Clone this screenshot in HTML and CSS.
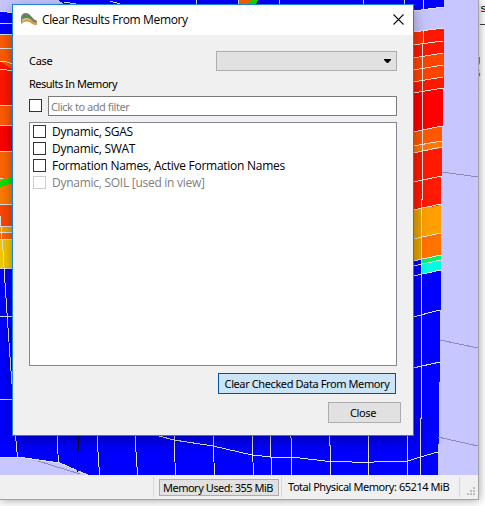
FILE: index.html
```html
<!DOCTYPE html>
<html lang="en">
<head>
<meta charset="utf-8">
<title>Clear Results From Memory</title>
<link rel="stylesheet" href="styles.css">
</head>
<body>
<div class="behind"><span class="in">s</span><span class="in">—</span><span>:</span><span>g</span><span>5</span><span>)</span></div>
<main class="app">
  <svg class="scene" width="478" height="475" viewBox="0 0 478 475" shape-rendering="crispEdges" aria-hidden="true">
    <rect width="478" height="475" fill="#c8c6ff"/>
    <path fill="#0000ff" d="M0 11L14 13V34H0ZM58 0H444V7L413 11V4H64ZM0 268H12V436H413V276L441 270L440 352L438 475H88L60 463L18 457H0Z"/>
    <path fill="#ff5b00" d="M0 34H13V151H0Z"/>
    <path fill="#ff1800" d="M0 61L13 70V105H0Z"/>
    <path fill="#ff0000" d="M0 125H13V152H0Z"/>
    <path fill="#ff6600" d="M0 152H13V240H0Z"/>
    <path fill="#ff7b00" d="M0 178H13V205H0Z"/>
    <path fill="#ff4800" d="M0 205H13V227H0Z"/>
    <path fill="#f5a000" d="M0 227H13V233H0Z"/>
    <path fill="#f5cb00" d="M0 239H13V269H0Z"/>
    <path fill="#ff3000" d="M413 32L444 28V41L413 45Z"/>
    <path fill="#ff1800" d="M423 30L444 28V53L413 58V45L423 43Z"/>
    <path fill="#ff4400" d="M413 58L444 53V77L413 82Z"/>
    <path fill="#ff1800" d="M413 82L444 77V88L413 93Z"/>
    <path fill="#ff0000" d="M413 93L443 88V126L413 132Z"/>
    <path fill="#ff5900" d="M413 132L442 126V141L413 146Z"/>
    <path fill="#ff7700" d="M413 146L442 141V148L413 153Z"/>
    <path fill="#ff1a00" d="M413 153L442 148L441 205L413 210Z"/>
    <path fill="#ffa000" d="M413 210L441 205V233L413 239Z"/>
    <path fill="#e8a500" d="M413 210L421 208V260L413 261Z"/>
    <path fill="#ff7300" d="M422 237L441 233V255L422 259Z"/>
    <path fill="#00f56d" d="M422 259L441 255V260L422 264Z"/>
    <path fill="#00ffe0" d="M422 264L441 260V270L422 274Z"/>
    <path fill="#0000ff" d="M413 261L421 259V275L413 276Z"/>
    <path fill="#f56500" d="M238 0H252L250 4H238Z"/>
    <path fill="#00e600" d="M252 0H258L256 4H249ZM0 181L13 177V183L0 187Z"/>
    <path class="mesh" d="M0 11L13 13M0 23H13M0 34H13M0 48H13M0 61L7 62L13 64M0 69L13 71M0 105H13M0 125H13M0 151L13 152M0 178H3M0 204L13 205M0 226L13 227M0 232L13 233M0 239L13 240M0 268H12M0 316H13M0 399H10L12 400M0 216L3 250L5 283L8 328L11 371V384"/>
    <path class="mesh" d="M64 2L76 4M110 1L120 4M196.500 0V4M238.500 0V4M279.500 0V4M363.500 0V4M404.500 0V4M423.500 0V10M413 11L444 7M413 32L444 28M413 45L443 41M413 58L443 53M413 70L443 65M413 82L443 77M413 93L443 88M423.500 30V44M422.500 44V199L421.500 200V418L420.500 419V475M413 132L442 126M413 146L442 141M413 153L442 147M413 182L442 176M413 210L441 204M413 239L441 233M413 261L441 255M413 266L441 260M413 276L441 270M413 317L440 310M413 368L440 362"/>
    <path class="mesh" d="M15.500 436L17.500 457M57 436L58.500 463M97 436L99.500 475M135 436L137.500 475M174 436L175.500 475M213 436L214.500 475M252 436L253.500 475M270.500 436V457L271.500 458V475M290.500 436L291.500 440V475M329.500 436V445L330.500 446V475M368.500 436V475M407.500 436V475M159 436L174 440L213 446L252 455L271 457H291L325 461L352 462H374L408 461L420 457L438 452M0 457H18L60 463L78 471L88 475"/>
    <path fill="none" stroke="#111" d="M78.500 436V450L77.500 451V472"/>
    <path fill="none" stroke="#8d8bb5" d="M38 461L80 474M442 172L478 177M440 340L478 348M438 437L478 446"/>
  </svg>
  <footer class="status">
    <span class="sep"></span>
    <span class="used">Memory Used: 355 MiB</span>
    <span class="sep near"></span>
    <span class="total">Total Physical Memory: 65214 MiB</span>
    <span class="sep last"></span>
    <svg class="grip" width="9" height="9" viewBox="0 0 9 9" aria-hidden="true"><path fill="#bdbdbd" d="M6 0h2v2h-2zM3 3h2v2h-2zM6 3h2v2h-2zM0 6h2v2h-2zM3 6h2v2h-2zM6 6h2v2h-2z"/></svg>
  </footer>
</main>
<section class="dialog">
  <header class="title">
    <svg width="17" height="13" viewBox="0 0 17 13" aria-hidden="true">
      <path fill="#777b70" d="M0 4Q1 0 5 0Q8 0 10 3Q13 7 16 8V12L12 11L8 8L4 7L0 11Z"/>
      <path fill="#439747" d="M2 4Q4 .5 7 2L10 5L5 4.500L2 6Z"/>
      <path fill="#d8cda9" d="M1 6.500Q4 4 8 5.500L12 8L7 7L1 8.500Z"/>
      <path fill="#d5a143" d="M0 8.500Q4 5.500 8 6.500Q12 9.500 16 9.500V12Q12 12 9 9.500Q5 7 0 11Z"/>
    </svg>
    <h1>Clear Results From Memory</h1>
    <svg class="x" width="11" height="11" viewBox="0 0 11 11" aria-hidden="true"><path fill="none" stroke="#111" stroke-width="1.100" d="M.5.5L10.500 10.500M10.500.5L.5 10.500"/></svg>
  </header>
  <div class="body">
    <div class="case"><span class="t-case">Case</span><span class="combo"><svg width="7" height="4" viewBox="0 0 7 4"><path d="M0 0H7V1L4 4H3L0 1Z"/></svg></span></div>
    <div class="heading">Results In Memory</div>
    <div class="filter"><span class="check"></span><span class="input">Click to add filter</span></div>
    <ul class="list">
      <li><span class="check"></span><span>Dynamic, SGAS</span></li>
      <li><span class="check"></span><span>Dynamic, SWAT</span></li>
      <li><span class="check"></span><span>Formation Names, Active Formation Names</span></li>
      <li class="off"><span class="check"></span><span>Dynamic, SOIL [used in view]</span></li>
    </ul>
    <div class="btn primary">Clear Checked Data From Memory</div>
    <div class="btn close">Close</div>
  </div>
</section>
</body>
</html>
```
FILE: styles.css
```css
* { box-sizing: border-box; }
body {
  margin: 0;
  width: 485px;
  height: 506px;
  overflow: hidden;
  position: relative;
  background: #fff;
  font: 11px/14px "Noto Sans", sans-serif;
  color: #000;
  white-space: nowrap;
}
.app {
  position: relative;
  width: 479px;
  height: 500px;
  border-right: 1px solid #a2a2a8;
  border-bottom: 1px solid #a2a2a2;
  background: #f0f0f0;
  box-shadow: 0 0 9px rgba(0, 0, 0, .4);
}
.scene { display: block; }
.mesh { fill: none; stroke: #e2e2e2; }
.behind {
  position: absolute;
  left: 479px;
  top: 2px;
  width: 6px;
  display: grid;
  grid-template-rows: 15px 20px 16px 14px 16px 16px;
  overflow: hidden;
  color: #555;
  font: 11px/14px "Liberation Mono", monospace;
}
.behind span { margin-left: -5px; }
.behind .in { margin-left: 1px; color: #000; }
.status { display: flex; align-items: center; height: 24px; }
.sep { width: 1px; height: 20px; margin-left: 153px; background: #d7d7d7; }
.used {
  width: 120px;
  height: 17px;
  margin-left: 5px;
  padding-left: 3px;
  border: 1px solid #adadad;
  background: #e1e1e1;
  line-height: 16px;
  letter-spacing: -.5px;
}
.near { margin-left: 2px; }
.total { width: 161px; margin-left: 6px; letter-spacing: -.45px; }
.last { margin-left: 10px; }
.grip { margin: 8px 0 0 7px; }
.dialog {
  position: absolute;
  left: 12px;
  top: 4px;
  width: 402px;
  height: 432px;
  border: 1px solid #1883d7;
  background: #f0f0f0;
  box-shadow: 0 4px 14px rgba(0, 0, 0, .35);
}
.title { display: flex; align-items: center; height: 30px; padding: 0 9px 2px 8px; background: #fff; }
h1 { margin: 1px 0 0 4px; font: 12px/16px "Open Sans", sans-serif; letter-spacing: -.36px; }
.x { margin-left: auto; }
.body { display: flex; flex-direction: column; padding: 16px 16px 0; }
.case { display: flex; justify-content: space-between; align-items: center; height: 20px; letter-spacing: -.3px; }
.combo {
  display: flex;
  align-items: center;
  justify-content: flex-end;
  width: 181px;
  height: 20px;
  padding-right: 5px;
  border: 1px solid #adadad;
  background: #e1e1e1;
}
.heading { height: 14px; margin-top: 6px; letter-spacing: -.5px; }
.filter { display: flex; align-items: center; height: 20px; margin-top: 5px; }
.filter .check { margin-bottom: 1px; }
.check { flex: none; width: 13px; height: 13px; border: 1px solid #333; background: #fff; }
.input {
  width: 349px;
  height: 20px;
  margin-left: 6px;
  padding-left: 2px;
  border: 1px solid #7a7a7a;
  background: #fff;
  color: #808080;
  line-height: 20px;
  letter-spacing: -.45px;
}
.list {
  width: 368px;
  height: 244px;
  margin: 6px 0 0;
  padding: 0 3px;
  border: 1px solid #828790;
  background: #fff;
  list-style: none;
  font: 12px/17px "Open Sans", sans-serif;
  letter-spacing: -.27px;
}
.list li { display: flex; align-items: center; height: 17px; }
.list li span + span { margin-left: 6px; }
.off { color: #808080; }
.off .check { border-color: #ccc; }
.btn {
  align-self: flex-end;
  height: 21px;
  border: 1px solid #adadad;
  background: #e1e1e1;
  line-height: 20px;
  text-align: center;
  letter-spacing: -.4px;
}
.primary { width: 178px; margin: 7px 1px 0 0; border-color: #00549e; background: #cce4f7; }
.close { width: 73px; margin: 8px -4px 0 0; padding-right: 3px; }
```
